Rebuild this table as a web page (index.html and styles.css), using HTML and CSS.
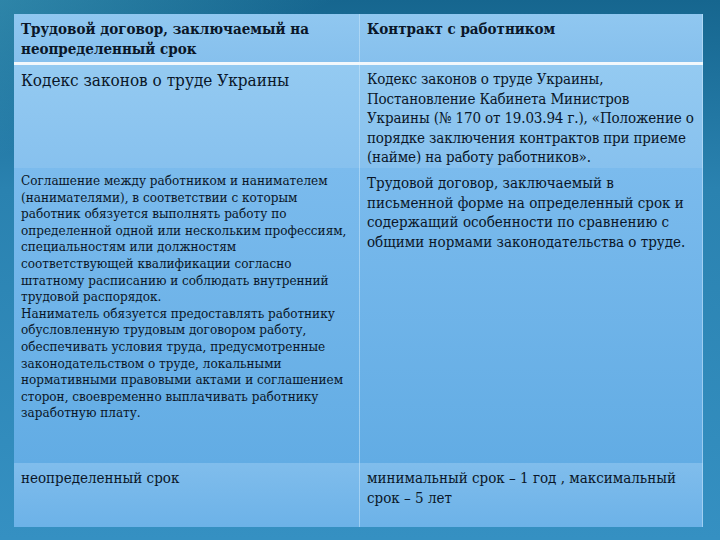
FILE: index.html
```html
<!DOCTYPE html>
<html lang="ru">
<head>
<meta charset="utf-8">
<link rel="stylesheet" href="styles.css">
</head>
<body>
<div class="slide">
  <div class="table">
    <div class="cell head">Трудовой договор, заключаемый на неопределенный срок</div>
    <div class="cell head">Контракт с работником</div>
    <div class="sep"></div>
    <div class="cell r2 big">Кодекс законов о труде Украины</div>
    <div class="cell r2 lines">Кодекс законов о труде Украины,<br>Постановление Кабинета Министров<br>Украины (№ 170 от 19.03.94 г.), «Положение о<br>порядке заключения контрактов при приеме<br>(найме) на работу работников».</div>
    <div class="cell r3 small lines">Соглашение между работником и нанимателем<br>(нанимателями), в соответствии с которым<br>работник обязуется выполнять работу по<br>определенной одной или нескольким профессиям,<br>специальностям или должностям<br>соответствующей квалификации согласно<br>штатному расписанию и соблюдать внутренний<br>трудовой распорядок.<br>Наниматель обязуется предоставлять работнику<br>обусловленную трудовым договором работу,<br>обеспечивать условия труда, предусмотренные<br>законодательством о труде, локальными<br>нормативными правовыми актами и соглашением<br>сторон, своевременно выплачивать работнику<br>заработную плату.</div>
    <div class="cell r3 r3b">Трудовой договор, заключаемый в письменной форме на определенный срок и содержащий особенности по сравнению с общими нормами законодательства о труде.</div>
    <div class="cell r4">неопределенный срок</div>
    <div class="cell r4">минимальный срок – 1 год , максимальный срок – 5 лет</div>
  </div>
</div>
</body>
</html>
```
FILE: styles.css
```css
html, body {
  margin: 0;
  padding: 0;
}
body {
  width: 720px;
  height: 540px;
  overflow: hidden;
  font-family: "DejaVu Serif Condensed", "DejaVu Serif", "Liberation Serif", serif;
  font-stretch: condensed;
  color: #0a1628;
}
.slide {
  width: 720px;
  height: 540px;
  box-sizing: border-box;
  padding: 14px 17px 13px 14px;
  background:
    linear-gradient(155deg, rgba(90,190,215,0.35) 0%, rgba(90,190,215,0) 18%),
    linear-gradient(180deg, #16668f 0%, #2a82b0 35%, #3590c2 100%);
}
.table {
  display: grid;
  grid-template-columns: 346px 343px;
  grid-template-rows: 48px 3px 103px 295px 64px;
  width: 689px;
  height: 513px;
}
.sep {
  grid-column: 1 / 3;
  background: #f2f8fc;
}
.cell {
  box-sizing: border-box;
  padding: 4px 6px 0 7px;
  font-size: 15px;
  line-height: 19.5px;
  border-right: 1px solid rgba(200,230,250,0.55);
}
.lines {
  white-space: nowrap;
}
.head {
  font-weight: bold;
  line-height: 20px;
  padding-top: 5px;
  background: linear-gradient(180deg, #90c7f0 0%, #86c0ed 100%);
}
.r2 {
  padding-top: 5px;
  background: linear-gradient(180deg, #94caf1 0%, #87c1ee 100%);
}
.r2.lines {
  letter-spacing: -0.15px;
}
.r3 {
  padding-top: 5px;
  background: linear-gradient(180deg, #7bbbed 0%, #62ace4 100%);
}
.r3b {
  padding-top: 6px;
}
.r4 {
  padding-top: 6px;
  background: linear-gradient(180deg, #80bdec 0%, #6cb2e8 100%);
}
.big {
  font-size: 17px;
  line-height: 20px;
}
.small {
  font-size: 13.4px;
  line-height: 16.6px;
}
```
